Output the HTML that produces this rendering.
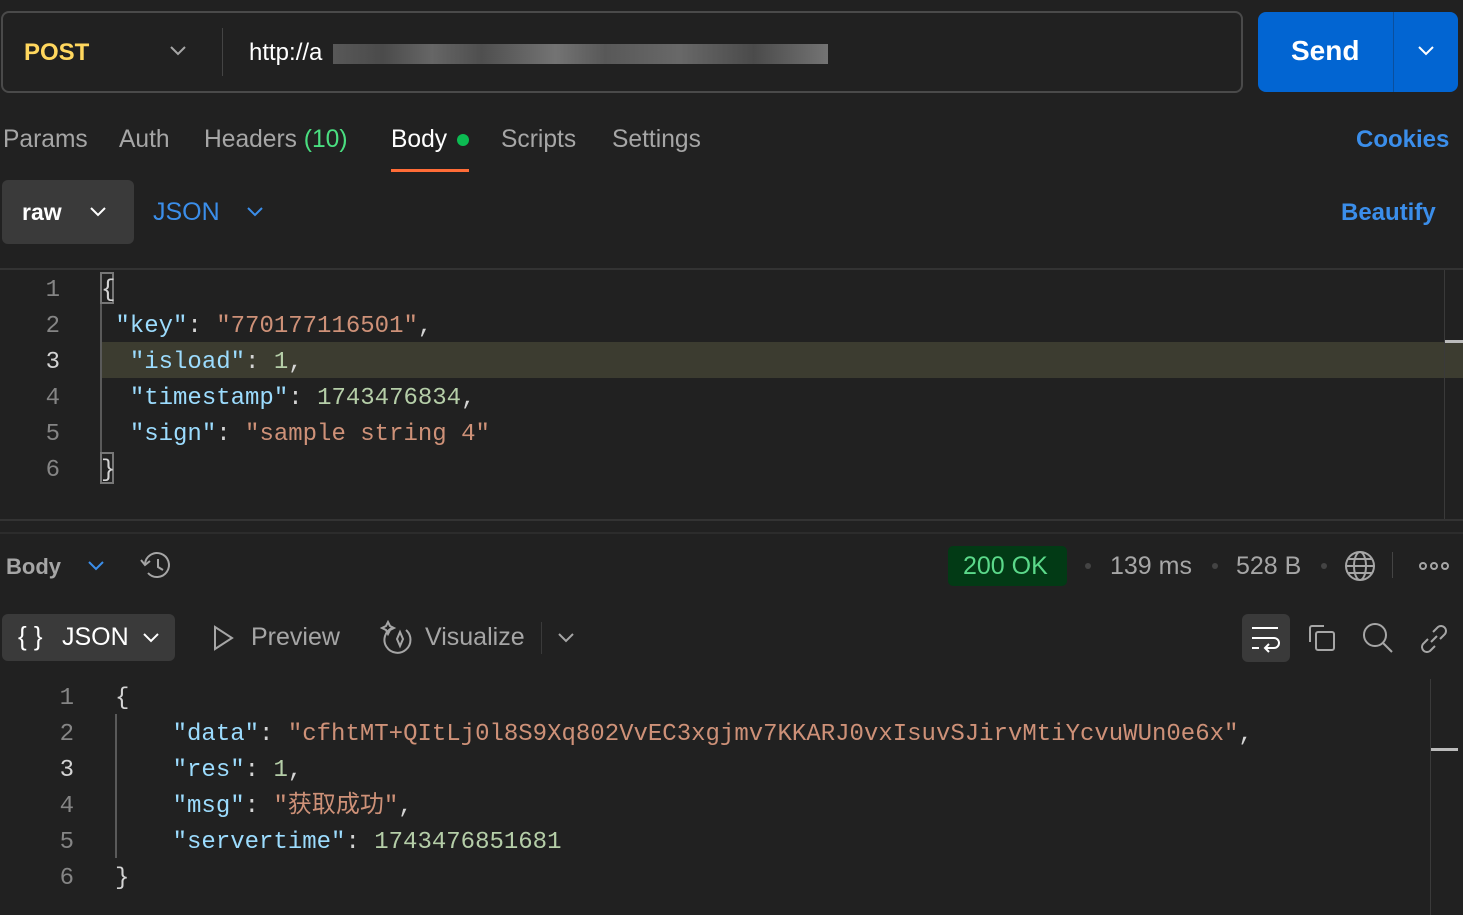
<!DOCTYPE html>
<html><head><meta charset="utf-8"><style>
*{margin:0;padding:0;box-sizing:border-box}
body{width:1463px;height:915px;background:#212121;font-family:"Liberation Sans",sans-serif;color:#a6a6a6;position:relative;overflow:hidden}
.a{position:absolute;white-space:nowrap}
.mono{font-family:"Liberation Mono","Noto Sans CJK SC",monospace;font-size:24px;line-height:36px}
.k{color:#9cdcfe}.s{color:#ce9178}.n{color:#b5cea8}.p{color:#d4d4d4}
.ln{color:#858585;text-align:right;width:30px}
.t{font-size:24.6px}
</style></head><body>
<!-- URL bar -->
<div class="a" style="left:1px;top:11px;width:1242px;height:82px;border:2px solid #4a4a4a;border-radius:8px"></div>
<div class="a" style="left:24px;top:39px;font-size:24px;font-weight:bold;color:#ffd75e">POST</div>
<svg class="a" style="left:168px;top:44px" width="20" height="14"><path d="M3 3l7 7 7-7" stroke="#a6a6a6" stroke-width="2" fill="none"/></svg>
<div class="a" style="left:222px;top:28px;width:1px;height:48px;background:#444"></div>
<div class="a" style="left:249px;top:39px;font-size:24px;color:#fff">http://a</div>
<div class="a" style="left:333px;top:44px;width:495px;height:20px;background:linear-gradient(90deg,#666,#555 10%,#777 20%,#5a5a5a 30%,#888 45%,#666 55%,#7a7a7a 70%,#555 85%,#888);opacity:.8"></div>
<div class="a" style="left:1258px;top:12px;width:200px;height:80px;background:#0265d2;border-radius:8px"></div>
<div class="a" style="left:1393px;top:12px;width:1px;height:80px;background:#0a4f9e"></div>
<div class="a" style="left:1291px;top:35px;font-size:28px;font-weight:bold;color:#fff">Send</div>
<svg class="a" style="left:1416px;top:44px" width="20" height="14"><path d="M3 3l7 7 7-7" stroke="#fff" stroke-width="2" fill="none"/></svg>
<!-- tabs -->
<div class="a t" style="left:3px;top:126px">Params</div>
<div class="a t" style="left:119px;top:126px">Auth</div>
<div class="a t" style="left:204px;top:126px">Headers <span style="color:#4ade80">(10)</span></div>
<div class="a t" style="left:391px;top:126px;color:#fff">Body</div>
<div class="a" style="left:457px;top:134px;width:12px;height:12px;border-radius:50%;background:#0cbb52"></div>
<div class="a" style="left:391px;top:169px;width:78px;height:3px;background:#ff6c37"></div>
<div class="a t" style="left:501px;top:126px">Scripts</div>
<div class="a t" style="left:612px;top:126px">Settings</div>
<div class="a" style="left:1356px;top:126px;font-size:24px;font-weight:bold;color:#3b8eea">Cookies</div>
<!-- raw/json -->
<div class="a" style="left:2px;top:180px;width:132px;height:64px;background:#3a3a3a;border-radius:6px"></div>
<div class="a" style="left:22px;top:199px;font-size:23px;font-weight:bold;color:#fff">raw</div>
<svg class="a" style="left:88px;top:205px" width="20" height="14"><path d="M3 3l7 7 7-7" stroke="#fff" stroke-width="2" fill="none"/></svg>
<div class="a" style="left:153px;top:198px;font-size:25px;color:#3b8eea">JSON</div>
<svg class="a" style="left:245px;top:205px" width="20" height="14"><path d="M3 3l7 7 7-7" stroke="#3b8eea" stroke-width="2" fill="none"/></svg>
<div class="a" style="left:1341px;top:199px;font-size:24px;font-weight:bold;color:#3b8eea">Beautify</div>
<!-- request editor -->
<div class="a" style="left:0;top:268px;width:1463px;height:2px;background:#333"></div>
<div class="a" style="left:102px;top:342px;width:1361px;height:36px;background:#3c3c30"></div>
<div class="a" style="left:1444px;top:270px;width:1px;height:250px;background:#3a3a3a"></div>
<div class="a" style="left:1445px;top:340px;width:18px;height:3px;background:#bbb"></div>
<div class="a" style="left:100px;top:286px;width:2px;height:180px;background:#5a5a5a"></div>
<div class="a mono ln" style="left:30px;top:273px">1<br>2<br><span style="color:#d4d4d4">3</span><br>4<br>5<br>6</div>
<div class="a" style="left:100px;top:272px;width:14px;height:32px;border:2px solid #777"></div>
<div class="a" style="left:100px;top:452px;width:14px;height:32px;border:2px solid #777"></div>
<div class="a mono p" style="left:101px;top:273px">{<br>&nbsp;<span class="k">"key"</span>: <span class="s">"770177116501"</span>,<br>&nbsp;&nbsp;<span class="k">"isload"</span>: <span class="n">1</span>,<br>&nbsp;&nbsp;<span class="k">"timestamp"</span>: <span class="n">1743476834</span>,<br>&nbsp;&nbsp;<span class="k">"sign"</span>: <span class="s">"sample string 4"</span><br>}</div>
<div class="a" style="left:0;top:519px;width:1463px;height:2px;background:#333"></div>
<div class="a" style="left:0;top:532px;width:1463px;height:2px;background:#2c2c2c"></div>
<!-- response header -->
<div class="a" style="left:6px;top:554px;font-size:22px;font-weight:bold;color:#a6a6a6">Body</div>
<svg class="a" style="left:86px;top:559px" width="20" height="14"><path d="M3 3l7 7 7-7" stroke="#3b8eea" stroke-width="2" fill="none"/></svg>
<svg class="a" style="left:139px;top:550px" width="36" height="32" fill="none" stroke="#a6a6a6" stroke-width="2"><path d="M6 14a12 12 0 1 1 3 9"/><path d="M2 10l4 5 5-4"/><path d="M19 9v8l5 3"/></svg>
<div class="a" style="left:948px;top:546px;width:119px;height:40px;background:#023a15;border-radius:5px"></div>
<div class="a" style="left:963px;top:552px;font-size:25px;color:#5bd98a">200 OK</div>
<div class="a" style="left:1085px;top:563px;width:6px;height:6px;border-radius:50%;background:#444"></div>
<div class="a" style="left:1110px;top:552px;font-size:25px">139 ms</div>
<div class="a" style="left:1212px;top:563px;width:6px;height:6px;border-radius:50%;background:#444"></div>
<div class="a" style="left:1236px;top:552px;font-size:25px">528 B</div>
<div class="a" style="left:1321px;top:563px;width:6px;height:6px;border-radius:50%;background:#444"></div>
<svg class="a" style="left:1343px;top:549px" width="34" height="34" fill="none" stroke="#a6a6a6" stroke-width="2"><circle cx="17" cy="17" r="14"/><ellipse cx="17" cy="17" rx="6" ry="14"/><path d="M3 17h28M5 10h24M5 24h24"/></svg>
<div class="a" style="left:1392px;top:552px;width:1px;height:26px;background:#444"></div>
<svg class="a" style="left:1418px;top:560px" width="32" height="12" fill="none" stroke="#a6a6a6" stroke-width="2"><circle cx="5" cy="6" r="3"/><circle cx="16" cy="6" r="3"/><circle cx="27" cy="6" r="3"/></svg>
<!-- response toolbar -->
<div class="a" style="left:2px;top:614px;width:173px;height:47px;background:#3a3a3a;border-radius:6px"></div>
<div class="a" style="left:18px;top:621px;font-size:26px;color:#fff">{&nbsp;}</div>
<div class="a" style="left:62px;top:623px;font-size:25px;color:#fff">JSON</div>
<svg class="a" style="left:141px;top:631px" width="20" height="14"><path d="M3 3l7 7 7-7" stroke="#fff" stroke-width="2" fill="none"/></svg>
<svg class="a" style="left:210px;top:624px" width="26" height="28" fill="none" stroke="#a6a6a6" stroke-width="2"><path d="M5 3l17 11-17 11z"/></svg>
<div class="a" style="left:251px;top:623px;font-size:25px">Preview</div>
<svg class="a" style="left:380px;top:620px" width="36" height="36" fill="none" stroke="#a6a6a6" stroke-width="2"><path d="M12 8a13 13 0 1 0 14 2"/><path d="M20 12l3 7-3 7-3-7z"/><path d="M8 2l2 4 4 2-4 2-2 4-2-4-4-2 4-2z"/></svg>
<div class="a" style="left:425px;top:623px;font-size:25px">Visualize</div>
<div class="a" style="left:541px;top:622px;width:1px;height:32px;background:#3a3a3a"></div>
<svg class="a" style="left:556px;top:631px" width="20" height="14"><path d="M3 3l7 7 7-7" stroke="#a6a6a6" stroke-width="2" fill="none"/></svg>
<div class="a" style="left:1242px;top:614px;width:48px;height:48px;background:#3a3a3a;border-radius:6px"></div>
<svg class="a" style="left:1250px;top:624px" width="32" height="30" fill="none" stroke="#fff" stroke-width="2"><path d="M2 4h26M2 14h22a5 5 0 0 1 0 10h-8M2 24h7M19 20l-4 4 4 4"/></svg>
<svg class="a" style="left:1306px;top:622px" width="32" height="32" fill="none" stroke="#a6a6a6" stroke-width="2"><path d="M4 20V6a2 2 0 0 1 2-2h12"/><rect x="10" y="10" width="18" height="18" rx="2"/></svg>
<svg class="a" style="left:1361px;top:621px" width="34" height="34" fill="none" stroke="#a6a6a6" stroke-width="2"><circle cx="14" cy="14" r="11"/><path d="M22 22l9 9"/></svg>
<svg class="a" style="left:1417px;top:622px" width="34" height="34" fill="none" stroke="#a6a6a6" stroke-width="2"><path d="M14 20l6-6M11 17l-5 5a5 5 0 0 0 7 7l5-5M23 17l5-5a5 5 0 0 0-7-7l-5 5"/></svg>
<!-- response editor -->
<div class="a" style="left:1430px;top:679px;width:1px;height:236px;background:#3a3a3a"></div>
<div class="a" style="left:1431px;top:748px;width:27px;height:3px;background:#bbb"></div>
<div class="a" style="left:115px;top:714px;width:2px;height:144px;background:#5a5a5a"></div>
<div class="a mono ln" style="left:44px;top:681px">1<br>2<br><span style="color:#d4d4d4">3</span><br>4<br>5<br>6</div>
<div class="a mono p" style="left:115px;top:681px">{<br>&nbsp;&nbsp;&nbsp;&nbsp;<span class="k">"data"</span>: <span class="s">"cfhtMT+QItLj0l8S9Xq802VvEC3xgjmv7KKARJ0vxIsuvSJirvMtiYcvuWUn0e6x"</span>,<br>&nbsp;&nbsp;&nbsp;&nbsp;<span class="k">"res"</span>: <span class="n">1</span>,<br>&nbsp;&nbsp;&nbsp;&nbsp;<span class="k">"msg"</span>: <span class="s">"获取成功"</span>,<br>&nbsp;&nbsp;&nbsp;&nbsp;<span class="k">"servertime"</span>: <span class="n">1743476851681</span><br>}</div>
</body></html>
